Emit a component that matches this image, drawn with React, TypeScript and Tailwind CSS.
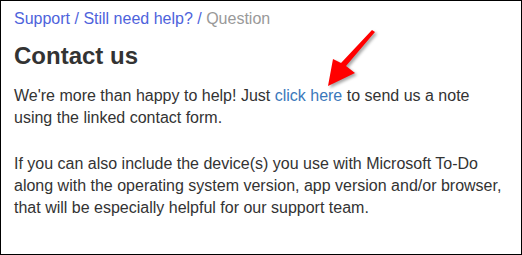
export default function App() {
  return (
    <div className="relative w-[522px] h-[255px] overflow-hidden border border-black bg-white px-[13px] pt-[7px] font-['Liberation_Sans',Arial,sans-serif] text-[16px] leading-[22px] text-[#333]">
      <nav className="text-[#4e63dc]">
        <a href="#">Support</a> / <a href="#">Still need help?</a> /{" "}
        <span className="text-[#999]">Question</span>
      </nav>
      <h1 className="mt-[12px] text-[24px] font-bold leading-[28px] text-[#333]">Contact us</h1>
      <p className="mt-[15px]">
        We're more than happy to help! Just{" "}
        <a href="#" className="text-[#3b78bb]">
          click here
        </a>{" "}
        to send us a note using the linked contact form.
      </p>
      <p className="mt-[24px]">
        If you can also include the device(s) you use with Microsoft To-Do along with the operating system version, app
        version and/or browser, that will be especially helpful for our support team.
      </p>
      <svg
        className="absolute left-0 top-0 pointer-events-none"
        width="522"
        height="255"
        viewBox="0 0 522 255"
        style={{ filter: "drop-shadow(2px 2px 1.5px rgba(0,0,0,0.35))" }}
      >
        <polygon points="371,29 374,31 345,65 354,72 327,85 332,58 340,62" fill="#f00" />
      </svg>
    </div>
  );
}
